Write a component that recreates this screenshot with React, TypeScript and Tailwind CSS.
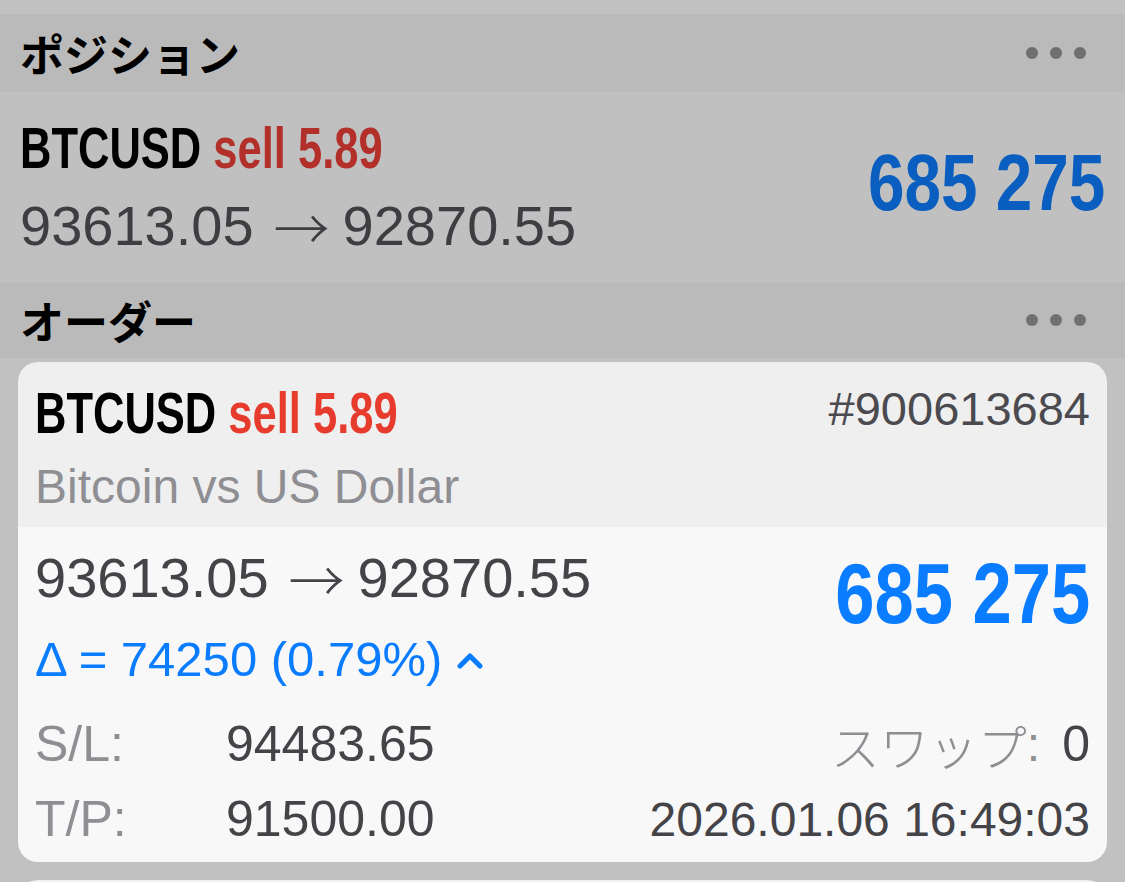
import React from 'react'

const sans = "font-['Liberation_Sans','Noto_Sans_CJK_JP',sans-serif]"
const jp = "font-['Noto_Sans_CJK_JP','Noto_Sans',sans-serif]"

function Dots() {
    return (
        <div className="flex gap-[12px]">
            <span className="w-[12px] h-[12px] rounded-full bg-[#707070]" />
            <span className="w-[12px] h-[12px] rounded-full bg-[#707070]" />
            <span className="w-[12px] h-[12px] rounded-full bg-[#707070]" />
        </div>
    )
}

function SectionHeader({ title, height }: { title: string; height: string }) {
    return (
        <div className={`${height} bg-[#bababa] flex items-center justify-between pl-[20px] pr-[39px]`}>
            <span className={`${jp} text-[44px] font-bold text-black leading-none`}>{title}</span>
            <Dots />
        </div>
    )
}

function Symbol({ red }: { red: string }) {
    return (
        <span className={`${sans} inline-block origin-left scale-x-[0.75] whitespace-nowrap text-[58px] font-bold`}>
            <span className="text-black">BTCUSD</span> <span className={red}>sell 5.89</span>
        </span>
    )
}

function PriceMove({ color }: { color: string }) {
    return (
        <span className={`flex items-center text-[56px] whitespace-nowrap ${color}`}>
            <span>93613.05</span>
            <span className={`${jp} font-light ml-[20px] mr-[13px]`}>→</span>
            <span>92870.55</span>
        </span>
    )
}

export default function App() {
    return (
        <div className={`${sans} w-[1125px] bg-[#c1c1c1] pt-[14px]`}>
            <SectionHeader title="ポジション" height="h-[78px]" />

            {/* Open position */}
            <div className="h-[190px] bg-[#c0c0c0] flex justify-between pl-[20px] pr-[20px]">
                <div className="pt-[17px]">
                    <div className="h-[78px] leading-[78px]">
                        <Symbol red="text-[#b3302a]" />
                    </div>
                    <div className="h-[78px] flex items-center">
                        <PriceMove color="text-[#3e3e42]" />
                    </div>
                </div>
                <div className="self-center pb-[8px]">
                    <span className="inline-block origin-right scale-x-[0.82] text-[80px] font-bold leading-none text-[#0a5ec0] whitespace-nowrap">
                        685 275
                    </span>
                </div>
            </div>

            <SectionHeader title="オーダー" height="h-[76px]" />

            {/* Order card */}
            <div className="mx-[18px] mt-[4px] rounded-[20px] overflow-hidden">
                <div className="bg-[#efefef] h-[165px] px-[17px] pt-[14px]">
                    <div className="flex justify-between items-center h-[74px] leading-[74px]">
                        <Symbol red="text-[#e63b2d]" />
                        <span className="text-[47px] text-[#4a4a4f] leading-none pb-[10px]">#900613684</span>
                    </div>
                    <div className="h-[74px] leading-[74px] text-[48px] text-[#8e8e93] whitespace-nowrap">
                        Bitcoin vs US Dollar
                    </div>
                </div>

                <div className="bg-[#f8f8f8] h-[335px] px-[17px] pt-[14px]">
                    <div className="flex justify-between">
                        <div>
                            <div className="h-[74px] flex items-center">
                                <PriceMove color="text-[#434348]" />
                            </div>
                            <div className="mt-[8px] h-[74px] flex items-center text-[49px] text-[#0a7cff] whitespace-nowrap">
                                <span>Δ = 74250 (0.79%)</span>
                                <svg className="ml-[15px] w-[26px] h-[18px]" viewBox="0 0 26 18" fill="none">
                                    <polyline points="3,15 13,5 23,15" stroke="#0a7cff" strokeWidth="5" strokeLinecap="round" strokeLinejoin="round" />
                                </svg>
                            </div>
                        </div>
                        <div className="mt-[7px] h-[90px] flex items-center">
                            <span className="inline-block origin-right scale-x-[0.83] text-[85px] font-bold leading-none text-[#0a7cff] whitespace-nowrap">
                                685 275
                            </span>
                        </div>
                    </div>

                    <div className="mt-[10px]">
                        <div className="h-[75px] flex items-center whitespace-nowrap">
                            <span className="w-[191px] text-[50px] text-[#8e8e93]">S/L:</span>
                            <span className="text-[50px] text-[#434348]">94483.65</span>
                            <span className="ml-auto flex items-center">
                                <span className={`${jp} text-[49px] font-light text-[#8e8e93]`}>スワップ</span>
                                <span className="text-[48px] text-[#8e8e93]">:</span>
                                <span className="ml-[22px] text-[50px] text-[#434348]">0</span>
                            </span>
                        </div>
                        <div className="h-[75px] flex items-center whitespace-nowrap">
                            <span className="w-[191px] text-[50px] text-[#8e8e93]">T/P:</span>
                            <span className="text-[50px] text-[#434348]">91500.00</span>
                            <span className="ml-auto text-[48px] text-[#434348]">2026.01.06 16:49:03</span>
                        </div>
                    </div>
                </div>
            </div>

            {/* Next card peeking */}
            <div className="mx-[18px] mt-[18px] h-[20px] rounded-t-[20px] bg-[#efefef]" />
        </div>
    )
}
